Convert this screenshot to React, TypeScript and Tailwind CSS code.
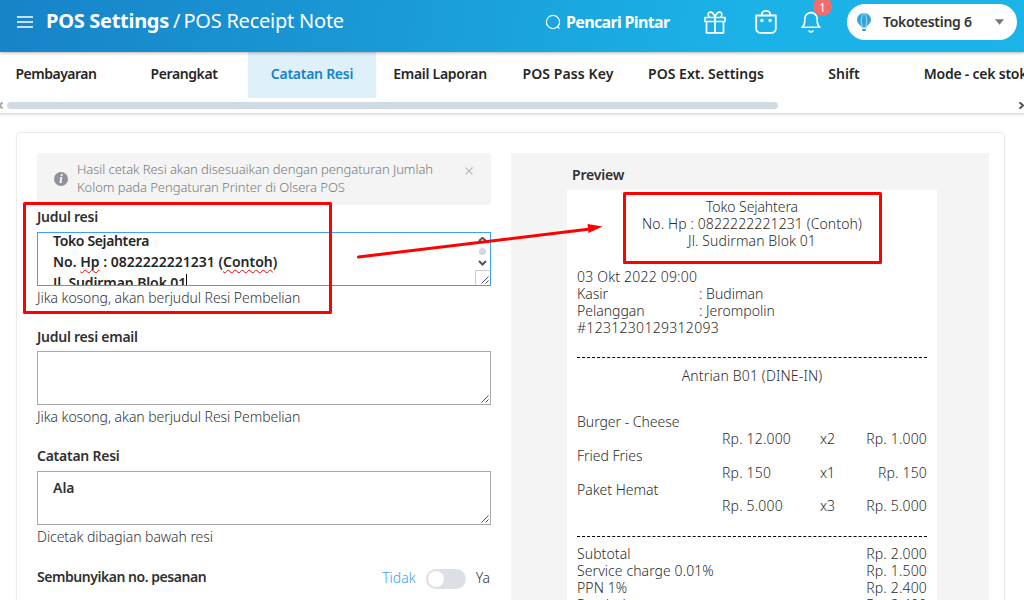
const tabs = [
  { label: 'Pembayaran', width: 'w-32', tracking: 'tracking-[-0.5px]' },
  { label: 'Perangkat', width: 'w-32', tracking: 'tracking-[-0.4px]' },
  { label: 'Catatan Resi', width: 'w-32', active: true },
  { label: 'Email Laporan', width: 'w-32' },
  { label: 'POS Pass Key', width: 'w-32', tracking: 'tracking-[0.1px]' },
  { label: 'POS Ext. Settings', width: 'w-[148px]', tracking: 'tracking-[0.02px]' },
  { label: 'Shift', width: 'w-32', tracking: 'tracking-normal' },
  { label: 'Mode - cek stok', width: 'w-[135px]', tracking: 'tracking-[-0.22px]' },
];

const orderItems = [
  { name: 'Burger - Cheese', price: 'Rp. 12.000', qty: 'x2', total: 'Rp. 1.000' },
  { name: 'Fried Fries', price: 'Rp. 150', qty: 'x1', total: 'Rp. 150' },
  { name: 'Paket Hemat', price: 'Rp. 5.000', qty: 'x3', total: 'Rp. 5.000' },
];

const totals = [
  ['Subtotal', 'Rp. 2.000'],
  ['Service charge 0.01%', 'Rp. 1.500'],
  ['PPN 1%', 'Rp. 2.400'],
  ['Pembulatan', 'Rp. 2.400'],
];

function GiftIcon() {
  return (
    <svg width="22" height="23" viewBox="0 0 22 23" fill="none" stroke="white" strokeWidth="1.7" strokeLinejoin="round">
      <path d="M1 6.5h20v4H1zM2.5 10.5h17v11.3h-17zM11 6.5v15.3" />
      <path d="M11 6.2C10 2.2 7.5.7 5.6 1.3 3.6 2 3.8 4.6 5.6 6.2M11 6.2c1-4 3.5-5.5 5.4-4.9 2 .7 1.8 3.3 0 4.9" />
    </svg>
  );
}

function BagIcon() {
  return (
    <svg width="22" height="24" viewBox="0 0 22 24" fill="none" stroke="white" strokeWidth="1.8">
      <path d="M1.2 5.5h19.6v13a4.4 4.4 0 0 1-4.4 4.4H5.6a4.4 4.4 0 0 1-4.4-4.4z" strokeLinejoin="round" />
      <path d="M6.6 5.5V4.8a4.4 3.9 0 0 1 8.8 0v.7" />
      <circle cx="6.9" cy="10.5" r="1.7" fill="white" stroke="none" />
      <circle cx="15.1" cy="10.5" r="1.7" fill="white" stroke="none" />
    </svg>
  );
}

function BellIcon() {
  return (
    <svg width="20" height="22" viewBox="0 0 20 22" fill="none" stroke="white" strokeWidth="1.6" strokeLinecap="round" strokeLinejoin="round">
      <path d="M1 16.3h18c-2.2-1.6-2.8-3.6-2.8-6.3V7.8a6.2 6.2 0 0 0-12.4 0V10c0 2.7-.6 4.7-2.8 6.3z" />
      <path d="M8.2 20c.8 1.4 2.8 1.4 3.6 0" />
    </svg>
  );
}

function BalloonIcon() {
  return (
    <svg width="14" height="18" viewBox="0 0 14 18">
      <path d="M7 0a7 6.7 0 0 1 7 6.7C14 10 11 11.5 9 14.5H5C3 11.5 0 10 0 6.7A7 6.7 0 0 1 7 0z" fill="#2fa5dc" />
      <path d="M7 0c-3 2-3.5 10-1.5 14.5M7 0c3 2 3.5 10 1.5 14.5" fill="none" stroke="#8fd3f2" strokeWidth="1.3" />
      <path d="M5.3 15.8h3.4V18H5.3z" fill="#2f9fd6" />
    </svg>
  );
}

function ResizeGrip() {
  return (
    <svg className="absolute right-px bottom-px" width="8" height="8" viewBox="0 0 8 8" stroke="#555" strokeWidth="1">
      <path d="M.5 7.5l7-7M4.5 7.5l3-3" />
    </svg>
  );
}

function Header() {
  return (
    <header className="relative z-10 flex h-[52px] items-start bg-[linear-gradient(100deg,#1783c8_0%,#1a9ad7_38%,#1bb2e7_72%,#1bb4e8_100%)] text-white shadow-[0_1px_3px_rgba(0,0,0,0.3)]">
      <svg className="mt-4 ml-[17px] shrink-0" width="16" height="12" viewBox="0 0 16 12" stroke="white" strokeWidth="1.3">
        <path d="M0 1h16M0 6h16M0 11h16" />
      </svg>
      <h1 className="mt-2 ml-[13px] w-[499px] text-xl leading-[26px] whitespace-nowrap">
        <span className="font-bold tracking-[-0.29px]">POS Settings</span>
        <span className="mr-[3px] ml-1">/</span>
        <span className="tracking-[-0.23px]">POS Receipt Note</span>
      </h1>
      <svg className="mt-3.5 shrink-0" width="16" height="16" viewBox="0 0 16 16" fill="none" stroke="white" strokeWidth="1.2">
        <circle cx="8" cy="8" r="6.6" />
        <path d="M12.3 12.5l2.2 2.2" />
      </svg>
      <span className="mt-[11px] ml-[5px] w-[138px] shrink-0 text-base leading-[22px] font-bold tracking-[-0.66px] whitespace-nowrap">Pencari Pintar</span>
      <div className="mt-[11px] w-[51px] shrink-0"><GiftIcon /></div>
      <div className="mt-2.5 w-[46px] shrink-0"><BagIcon /></div>
      <div className="relative mt-[11px] w-[46px] shrink-0">
        <BellIcon />
        <span className="absolute -top-[14px] left-3 flex h-[19px] w-[19px] items-center justify-center rounded-full bg-[#f56c6c] pt-0.5 text-xs leading-3">1</span>
      </div>
      <div className="mt-1 flex h-9 w-[170px] shrink-0 items-center rounded-full bg-white pl-2.5 text-[#333]">
        <BalloonIcon />
        <span className="ml-3 w-[112px] pb-px text-sm font-semibold tracking-[-0.28px]">Tokotesting 6</span>
        <svg width="9" height="6" viewBox="0 0 10 6" fill="#777"><path d="M0 0h10L5 6z" /></svg>
      </div>
    </header>
  );
}

function TabBar() {
  return (
    <nav className="h-[62px] overflow-hidden border-b border-[#dcdcdc] shadow-[0_1px_3px_rgba(0,0,0,0.12)]">
      <div className="-ml-2 flex h-[46px]">
        {tabs.map((tab) => (
          <div
            key={tab.label}
            className={`${tab.width} ${tab.tracking ?? 'tracking-[-0.27px]'} ${tab.active ? 'bg-[#def1fb] text-[#1682cd]' : 'text-[#262626]'} flex shrink-0 items-center justify-center pb-0.5 text-sm font-semibold whitespace-nowrap`}
          >
            {tab.label}
          </div>
        ))}
      </div>
      <div className="mt-1 flex h-[7px] items-center">
        <svg width="3" height="7" viewBox="0 0 3 7" fill="none" stroke="#aaa" strokeWidth="2"><path d="M2.5.5l-3 3 3 3" /></svg>
        <div className="ml-1 h-[7px] w-[771px] rounded-full bg-[#d0dae3]" />
        <svg className="ml-auto" width="6" height="7" viewBox="0 0 6 7" fill="none" stroke="#555" strokeWidth="2"><path d="M1.5.3L5 3.5 1.5 6.7" /></svg>
      </div>
    </nav>
  );
}

function FieldLabel({ children }: { children: string }) {
  return <p className="text-sm leading-5 font-semibold tracking-[-0.25px] text-[#303133]">{children}</p>;
}

function Help({ children }: { children: string }) {
  return <p className="text-sm leading-5 font-light tracking-[-0.06px] text-[#333]">{children}</p>;
}

function SettingsForm() {
  return (
    <div className="w-[454px] shrink-0">
      <div className="flex h-[52px] rounded bg-[#f4f4f4] text-[#909399]">
        <div className="mt-[19px] ml-[17px] flex h-3.5 w-3.5 items-center justify-center rounded-full bg-[#909399] font-[Liberation_Serif] text-xs font-bold text-white italic">i</div>
        <p className="mt-[7px] ml-[9px] w-[388px] text-[13px] leading-[18px] font-light tracking-[-0.06px] whitespace-nowrap text-[#777a80]">
          Hasil cetak Resi akan disesuaikan dengan pengaturan Jumlah
          <br />
          Kolom pada Pengaturan Printer di Olsera POS
        </p>
        <svg className="mt-3.5" width="8" height="8" viewBox="0 0 8 8" stroke="#b8bbc2" strokeWidth="1.1"><path d="M.5.5l7 7M7.5.5l-7 7" /></svg>
      </div>

      <div className="pt-0.5"><FieldLabel>Judul resi</FieldLabel></div>
      <div className="relative mt-[5px] h-[54px] overflow-hidden border border-[#409eff] pl-[15px] text-sm leading-[21px] font-semibold text-[#262626]">
        <div className="-mt-[3px]">
          <p className="tracking-[-0.35px]">Toko Sejahtera</p>
          <p>
            No. <span className="underline decoration-red-600 decoration-wavy decoration-1 underline-offset-2 [text-decoration-skip-ink:none]">Hp</span> : 0822222221231 (
            <span className="underline decoration-red-600 decoration-wavy decoration-1 underline-offset-2 [text-decoration-skip-ink:none]">Contoh</span>)
          </p>
          <p className="flex tracking-[-0.1px]">Jl. Sudirman Blok 01<span className="mt-0.5 h-4 w-px bg-black" /></p>
        </div>
        <svg className="absolute top-1 right-[3px]" width="9" height="30" viewBox="0 0 8 30">
          <path d="M.5 4L4 .8 7.5 4" fill="none" stroke="#555" strokeWidth="2" />
          <circle cx="4" cy="14.5" r="3.6" fill="#d0dae3" />
          <path d="M.5 24L4 27.5 7.5 24" fill="none" stroke="#555" strokeWidth="2" />
        </svg>
        <div className="absolute right-0 bottom-0 h-[15px] w-[15px] border-t border-l border-[#ccc] bg-white"><ResizeGrip /></div>
      </div>
      <div className="pt-0.5"><Help>Jika kosong, akan berjudul Resi Pembelian</Help></div>

      <div className="pt-[19px]"><FieldLabel>Judul resi email</FieldLabel></div>
      <div className="relative mt-1 h-[54px] border border-[#a9a9a9]"><ResizeGrip /></div>
      <div className="pt-0.5"><Help>Jika kosong, akan berjudul Resi Pembelian</Help></div>

      <div className="pt-[19px]"><FieldLabel>Catatan Resi</FieldLabel></div>
      <div className="relative mt-[5px] h-[54px] border border-[#a9a9a9] pt-[5px] pl-[15px] text-sm leading-[21px] font-semibold text-[#303133]">
        Ala
        <ResizeGrip />
      </div>
      <div className="pt-0.5"><Help>Dicetak dibagian bawah resi</Help></div>

      <div className="flex items-start pt-5">
        <p className="flex-1 text-sm leading-5 font-semibold tracking-[-0.46px] text-[#303133]">Sembunyikan no. pesanan</p>
        <span className="text-sm leading-[21px] font-light text-[#409eff]">Tidak</span>
        <div className="mt-0.5 mr-2.5 ml-2.5 h-5 w-10 rounded-full bg-[#dcdfe6] p-0.5">
          <div className="h-4 w-4 rounded-full bg-white" />
        </div>
        <span className="pr-px text-sm leading-[21px] font-light text-[#333]">Ya</span>
      </div>
    </div>
  );
}

function ReceiptPreview() {
  return (
    <div className="h-[480px] w-[478px] shrink-0 bg-[#f4f4f4] px-14 pt-3">
      <p className="ml-[5px] text-sm leading-5 font-semibold tracking-[-0.2px] text-[#303133]">Preview</p>
      <div className="mt-[5px] h-[440px] w-[370px] bg-white px-2.5 pt-[9px] text-sm leading-[16.8px] font-light tracking-[0.1px] text-[#2c2c2c]">
        <div className="text-center">
          <p className="tracking-[-0.09px]">Toko Sejahtera</p>
          <p>No. Hp : 0822222221231 (Contoh)</p>
          <p>Jl. Sudirman Blok 01</p>
        </div>
        <div className="mt-5 tracking-normal">
          <p className="tracking-[0.2px]">03 Okt 2022 09:00</p>
          <div className="flex"><span className="w-[122px]">Kasir</span><span>: Budiman</span></div>
          <div className="flex"><span className="w-[122px]">Pelanggan</span><span>: Jerompolin</span></div>
          <p className="tracking-[0.3px]">#1231230129312093</p>
        </div>
        <div className="mt-5 border-t border-dashed border-black" />
        <p className="mt-2.5 text-center tracking-[0.15px]">Antrian B01 (DINE-IN)</p>
        <div className="mt-[30px]">
          {orderItems.map((item) => (
            <div key={item.name}>
              <p className="tracking-[-0.02px]">{item.name}</p>
              <div className="flex tracking-[0.18px]">
                <span className="ml-[145px] w-[98px]">{item.price}</span>
                <span className="tracking-normal">{item.qty}</span>
                <span className="ml-auto">{item.total}</span>
              </div>
            </div>
          ))}
        </div>
        <div className="mt-[21px] mb-[9px] border-t border-dashed border-black" />
        {totals.map(([label, amount]) => (
          <div key={label} className="flex justify-between">
            <span className="tracking-[0.08px]">{label}</span>
            <span className="tracking-[0.18px]">{amount}</span>
          </div>
        ))}
      </div>
    </div>
  );
}

// Red highlight boxes and the arrow from the title field to the receipt heading
function Annotations() {
  return (
    <svg className="pointer-events-none absolute inset-0 z-20" width="1024" height="600" viewBox="0 0 1024 600">
      <rect x="24.5" y="203.5" width="306" height="109" fill="none" stroke="red" strokeWidth="3" strokeLinejoin="round" />
      <rect x="624.5" y="193.5" width="256" height="69" fill="none" stroke="red" strokeWidth="3" strokeLinejoin="round" />
      <path d="M358.5 257L590 229" stroke="red" strokeWidth="3" strokeLinecap="round" />
      <path d="M587.5 224l15 2.5-14 6.5z" fill="red" />
    </svg>
  );
}

export default function App() {
  return (
    <div className="relative h-[600px] w-[1024px] overflow-hidden bg-white font-['Noto_Sans',sans-serif]">
      <Header />
      <TabBar />
      <main className="mt-[18px] ml-4 flex h-[500px] w-[989px] gap-5 rounded border border-[#ebebeb] px-5 pt-5 shadow-[0_0_3px_rgba(0,0,0,0.05)]">
        <SettingsForm />
        <ReceiptPreview />
      </main>
      <Annotations />
    </div>
  );
}
